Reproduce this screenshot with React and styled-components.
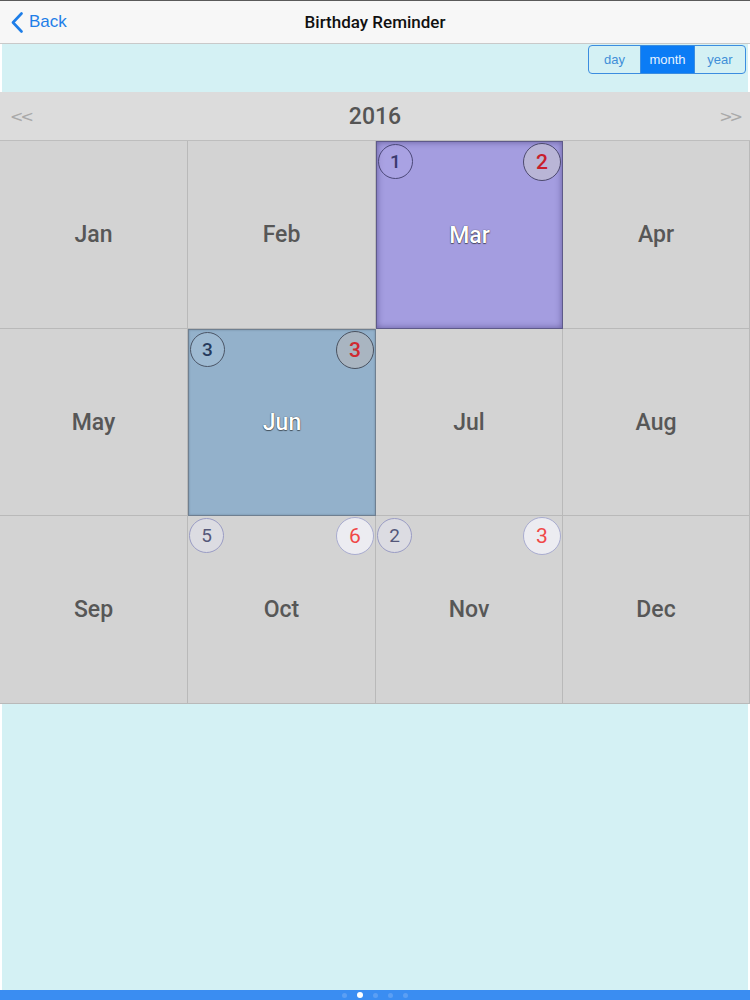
import React from "react";
import styled, { createGlobalStyle, css } from "styled-components";

const GlobalStyle = createGlobalStyle`
  html, body { margin: 0; padding: 0; background: #ffffff; }
  body { font-family: "Liberation Sans", Arial, sans-serif; }
  * { box-sizing: border-box; }
`;

const Screen = styled.div`
  width: 750px;
  height: 1000px;
  display: flex;
  flex-direction: column;
  background: #ffffff;
  overflow: hidden;
`;

const TopLine = styled.div`
  height: 1px;
  background: #5a5a5a;
`;

const NavBar = styled.header`
  height: 43px;
  background: #f7f7f7;
  border-bottom: 1px solid #c9c9c9;
  display: grid;
  grid-template-columns: 1fr auto 1fr;
  align-items: center;
`;

const BackButton = styled.button`
  justify-self: start;
  display: flex;
  align-items: center;
  gap: 6px;
  margin-left: 11px;
  padding: 0;
  border: 0;
  background: none;
  color: #1e7ee8;
  font-family: "Liberation Sans", Arial, sans-serif;
  font-size: 17px;
  cursor: pointer;
`;

const Title = styled.h1`
  margin: 0;
  font-size: 17px;
  color: #111;
  font-family: "Roboto", "Liberation Sans", sans-serif;
  font-weight: 500;
`;

const ModeBar = styled.div`
  height: 48px;
  margin: 0 2px;
  background: #d4f1f4;
  display: flex;
  justify-content: flex-end;
  align-items: flex-start;
  padding: 1px 2px 0 0;
`;

const Segmented = styled.div`
  display: flex;
  height: 29px;
  border: 1px solid #3b8de0;
  border-radius: 4px;
  overflow: hidden;
`;

const Segment = styled.button`
  width: ${(p) => p.$w}px;
  border: 0;
  border-left: ${(p) => (p.$first ? "0" : "1px solid #3b8de0")};
  padding: 0;
  font-family: "Liberation Sans", Arial, sans-serif;
  font-size: 13px;
  color: ${(p) => (p.$active ? "#e8f3ff" : "#3f8fd8")};
  background: ${(p) => (p.$active ? "#0b7cf5" : "transparent")};
  cursor: pointer;
`;

const YearHeader = styled.div`
  height: 48px;
  background: #dcdcdc;
  display: flex;
  align-items: center;
  justify-content: space-between;
  padding: 0 10px;
`;

const Arrow = styled.span`
  color: #a9a9a9;
  font-size: 16px;
  font-family: "DejaVu Sans", sans-serif;
  letter-spacing: -3px;
  width: 24px;
  text-align: ${(p) => (p.$right ? "right" : "left")};
`;

const YearLabel = styled.span`
  font-family: "Roboto", "Liberation Sans", sans-serif;
  font-weight: 500;
  font-size: 23px;
  color: #555;
`;

const MonthGrid = styled.div`
  display: grid;
  grid-template-columns: 188px 188px 187px 187px;
  grid-template-rows: 188px 187px 188px;
  border-top: 1px solid #bdbdbd;
`;

const highlight = {
  purple: css`
    background: #a49de0;
    border: 1px solid #5e5a8a;
    box-shadow: inset 0 0 6px rgba(40, 30, 90, 0.5);
  `,
  blue: css`
    background: #93b1cb;
    border: 1px solid #6f7f90;
    box-shadow: inset 0 0 2px rgba(40, 50, 70, 0.35);
  `,
};

const Cell = styled.div`
  position: relative;
  display: flex;
  align-items: center;
  justify-content: center;
  background: #d3d3d3;
  border-right: 1px solid #b9b9b9;
  border-bottom: 1px solid #b9b9b9;
  ${(p) => p.$tone && highlight[p.$tone]}
`;

const MonthName = styled.span`
  font-family: "Roboto", "Liberation Sans", sans-serif;
  font-weight: 500;
  font-size: 23px;
  color: ${(p) => (p.$light ? "#ffffff" : "#575757")};
  text-shadow: ${(p) =>
    p.$light ? "0 0 1px rgba(0,0,0,0.8), 0 1px 1px rgba(0,0,0,0.5)" : "none"};
`;

const badgeTones = {
  purple: { left: ["rgba(180,172,232,0.35)", "#4b4878", "#3b3a6e"], right: ["#b9b5d6", "#4d4a6e", "#c81e2c"] },
  blue: { left: ["rgba(170,195,218,0.5)", "#4b5566", "#263a5c"], right: ["#a9b5c1", "#4a5260", "#d02a30"] },
  plain: { left: ["#dcdce2", "#9a9cc4", "#55587a"], right: ["#ececf1", "#a9acd0", "#f04848"] },
};

const Badge = styled.span`
  position: absolute;
  top: ${(p) => (p.$side === "left" ? 2 : 1)}px;
  ${(p) => (p.$side === "left" ? "left: 1px;" : "right: 1px;")}
  width: ${(p) => (p.$side === "left" ? 35 : 38)}px;
  height: ${(p) => (p.$side === "left" ? 35 : 38)}px;
  border-radius: 50%;
  display: flex;
  align-items: center;
  justify-content: center;
  font-family: "Roboto", "Liberation Sans", sans-serif;
  font-weight: ${(p) => (p.$tone === "plain" ? 400 : 500)};
  font-size: ${(p) => (p.$side === "left" ? 19 : 21)}px;
  background: ${(p) => badgeTones[p.$tone][p.$side][0]};
  border: 1.5px solid ${(p) => badgeTones[p.$tone][p.$side][1]};
  color: ${(p) => badgeTones[p.$tone][p.$side][2]};
`;

const Filler = styled.div`
  flex: 1;
  margin: 0 2px;
  background: #d4f1f4;
`;

const PageBar = styled.div`
  height: 10px;
  background: #3a8df2;
  display: flex;
  justify-content: center;
  align-items: center;
  gap: 10px;
`;

const Dot = styled.span`
  width: ${(p) => (p.$active ? 6 : 5)}px;
  height: ${(p) => (p.$active ? 6 : 5)}px;
  border-radius: 50%;
  background: ${(p) => (p.$active ? "#ffffff" : "#5b9ff4")};
`;

const months = [
  { name: "Jan" },
  { name: "Feb" },
  { name: "Mar", tone: "purple", left: 1, right: 2 },
  { name: "Apr" },
  { name: "May" },
  { name: "Jun", tone: "blue", left: 3, right: 3 },
  { name: "Jul" },
  { name: "Aug" },
  { name: "Sep" },
  { name: "Oct", badge: "plain", left: 5, right: 6 },
  { name: "Nov", badge: "plain", left: 2, right: 3 },
  { name: "Dec" },
];

export default function App() {
  return (
    <>
      <GlobalStyle />
      <Screen>
        <TopLine />
        <NavBar>
          <BackButton>
            <svg width="12" height="21" viewBox="0 0 12 21" fill="none">
              <path d="M10.5 1.5 L2 10.5 L10.5 19.5" stroke="#1e7ee8" strokeWidth="2.6" strokeLinecap="round" strokeLinejoin="round" />
            </svg>
            Back
          </BackButton>
          <Title>Birthday Reminder</Title>
          <span />
        </NavBar>
        <ModeBar>
          <Segmented>
            <Segment $first $w={51}>day</Segment>
            <Segment $active $w={54}>month</Segment>
            <Segment $w={51}>year</Segment>
          </Segmented>
        </ModeBar>
        <YearHeader>
          <Arrow>&lt;&lt;</Arrow>
          <YearLabel>2016</YearLabel>
          <Arrow $right>&gt;&gt;</Arrow>
        </YearHeader>
        <MonthGrid>
          {months.map((m) => {
            const tone = m.tone || m.badge;
            return (
              <Cell key={m.name} $tone={m.tone}>
                {m.left != null && (
                  <Badge $side="left" $tone={tone}>{m.left}</Badge>
                )}
                {m.right != null && (
                  <Badge $side="right" $tone={tone}>{m.right}</Badge>
                )}
                <MonthName $light={!!m.tone}>{m.name}</MonthName>
              </Cell>
            );
          })}
        </MonthGrid>
        <Filler />
        <PageBar>
          {[0, 1, 2, 3, 4].map((i) => (
            <Dot key={i} $active={i === 1} />
          ))}
        </PageBar>
      </Screen>
    </>
  );
}
